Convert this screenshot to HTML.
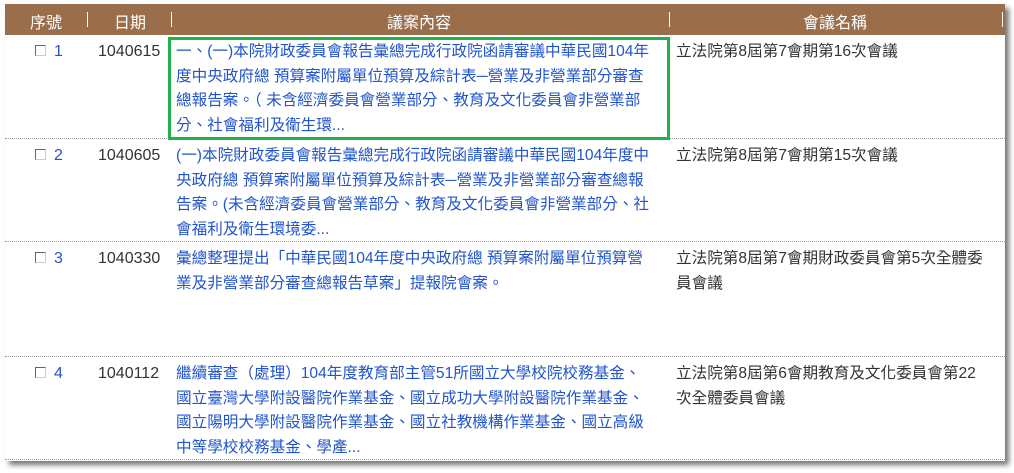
<!DOCTYPE html>
<html><head><meta charset="utf-8"><style>
*{margin:0;padding:0;box-sizing:border-box}
body{width:1014px;height:473px;background:#fff;position:relative;overflow:hidden;font-family:"Liberation Sans","Noto Sans CJK TC",sans-serif;font-size:15px;color:#333}
.panel{position:absolute;left:5px;top:4px;width:1000px;height:457px;background:#fff;box-shadow:4px 4px 5px #777}
.hd{position:absolute;left:5px;top:4px;width:1000px;height:31px;background:#9b6e4b;color:#fff;font-size:16px}
.hd span{position:absolute;top:5px}
.hd i{position:absolute;top:8px;width:1px;height:15px;background:#fff}
.sep{position:absolute;left:5px;width:1000px;border-top:1px dotted #999}
.t{position:absolute;line-height:24.5px;white-space:nowrap}
.n{font-size:16px}
.blue{color:#2255cc}
.cb{position:absolute;width:11px;height:11px;border:1px solid #666;border-right-color:#ccc;border-bottom-color:#ccc}
.txt{font-size:15.6px}
.green{position:absolute;left:168px;top:37px;width:502px;height:103px;border:3px solid #22b14c}
</style></head><body>
<div class="panel"></div>
<div class="hd">
<span style="left:25px">序號</span><i style="left:82px"></i>
<span style="left:109px">日期</span><i style="left:166px"></i>
<span style="left:382px">議案內容</span><i style="left:664px"></i>
<span style="left:798px">會議名稱</span><i style="left:997px"></i>
</div>
<div class="sep" style="top:138px"></div>
<div class="sep" style="top:241px"></div>
<div class="sep" style="top:356px"></div>
<div class="sep" style="top:459px"></div>
<div class="green"></div>

<div class="cb" style="left:35px;top:45px"></div><div class="t blue n" style="left:54px;top:40px">1</div>
<div class="t n" style="left:98px;top:40px">1040615</div>
<div class="t blue txt" style="left:176px;top:40px">一、(一)本院財政委員會報告彙總完成行政院函請審議中華民國104年<br>度中央政府總 預算案附屬單位預算及綜計表─營業及非營業部分審查<br>總報告案。（ 未含經濟委員會營業部分、教育及文化委員會非營業部<br>分、社會福利及衛生環...</div>
<div class="t txt" style="left:676px;top:40px">立法院第8屆第7會期第16次會議</div>

<div class="cb" style="left:35px;top:149px"></div><div class="t blue n" style="left:54px;top:144px">2</div>
<div class="t n" style="left:98px;top:144px">1040605</div>
<div class="t blue txt" style="left:176px;top:144px">(一)本院財政委員會報告彙總完成行政院函請審議中華民國104年度中<br>央政府總 預算案附屬單位預算及綜計表─營業及非營業部分審查總報<br>告案。(未含經濟委員會營業部分、教育及文化委員會非營業部分、社<br>會福利及衛生環境委...</div>
<div class="t txt" style="left:676px;top:144px">立法院第8屆第7會期第15次會議</div>

<div class="cb" style="left:35px;top:252px"></div><div class="t blue n" style="left:54px;top:247px">3</div>
<div class="t n" style="left:98px;top:247px">1040330</div>
<div class="t blue txt" style="left:176px;top:247px">彙總整理提出「中華民國104年度中央政府總 預算案附屬單位預算營<br>業及非營業部分審查總報告草案」提報院會案。</div>
<div class="t txt" style="left:676px;top:247px">立法院第8屆第7會期財政委員會第5次全體委<br>員會議</div>

<div class="cb" style="left:35px;top:367px"></div><div class="t blue n" style="left:54px;top:362px">4</div>
<div class="t n" style="left:98px;top:362px">1040112</div>
<div class="t blue txt" style="left:176px;top:362px">繼續審查（處理）104年度教育部主管51所國立大學校院校務基金、<br>國立臺灣大學附設醫院作業基金、國立成功大學附設醫院作業基金、<br>國立陽明大學附設醫院作業基金、國立社教機構作業基金、國立高級<br>中等學校校務基金、學產...</div>
<div class="t txt" style="left:676px;top:362px">立法院第8屆第6會期教育及文化委員會第22<br>次全體委員會議</div>
</body></html>
